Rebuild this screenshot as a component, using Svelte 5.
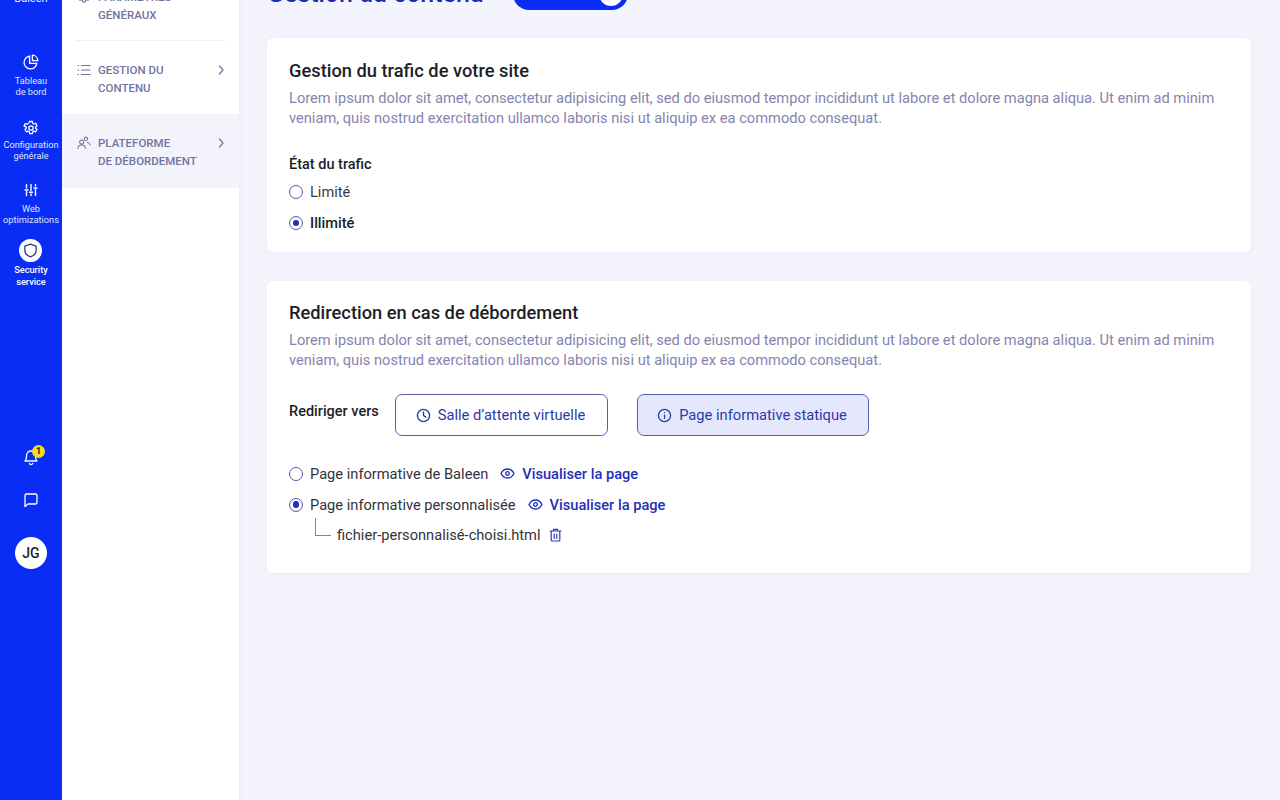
<script>
  const lorem = "Lorem ipsum dolor sit amet, consectetur adipisicing elit, sed do eiusmod tempor incididunt ut labore et dolore magna aliqua. Ut enim ad minim veniam, quis nostrud exercitation ullamco laboris nisi ut aliquip ex ea commodo consequat.";
</script>

<div class="page">
  <nav class="rail">
    <div class="brand">Baleen</div>
    <div class="rail-top">
      <div class="rail-item">
        <svg width="16" height="16" viewBox="0 0 16 16" fill="none" stroke="currentColor" stroke-width="1.3"><path d="M6.6 2.2a6.4 6.4 0 1 0 7.2 7.2H6.6z"/><path d="M9.4 1.2a5.6 5.6 0 0 1 5.4 5.4H9.4z"/></svg>
        <span>Tableau<br />de bord</span>
      </div>
      <div class="rail-item">
        <svg width="16" height="16" viewBox="0 0 16 16" fill="none" stroke="currentColor" stroke-width="1.3" stroke-linejoin="round"><path d="M6.7 1.5h2.6l.4 1.8 1.3.7 1.7-.6 1.3 2.3-1.3 1.2v1.4l1.3 1.2-1.3 2.3-1.7-.6-1.3.7-.4 1.8H6.7l-.4-1.8-1.3-.7-1.7.6-1.3-2.3 1.3-1.2V7.1L1 5.900l1.300-2.300 1.700.6 1.300-.7z"/><circle cx="8" cy="8" r="2.2"/></svg>
        <span>Configuration<br />générale</span>
      </div>
      <div class="rail-item">
        <svg width="14" height="14" viewBox="0 0 14 14" fill="none" stroke="currentColor" stroke-width="1.4" stroke-linecap="round"><path d="M2.5 1.5v3.4M2.5 8.5v4M7 1.5v6M7 11v1.5M11.5 1.5v1.4M11.5 6.5v6M1 7h3M5.500 9.200h3M10 5h3"/></svg>
        <span>Web<br />optimizations</span>
      </div>
      <div class="rail-item active">
        <div class="disc">
          <svg width="15" height="15" viewBox="0 0 16 16" fill="none" stroke="#2c3a8c" stroke-width="1.4" stroke-linejoin="round"><path d="M8 1.300 14 3.300v4.400c0 3.400-2.400 5.800-6 7-3.600-1.200-6-3.600-6-7V3.300z"/></svg>
        </div>
        <span>Security<br />service</span>
      </div>
    </div>
    <div class="rail-bottom">
      <div class="bell">
        <svg width="16" height="17" viewBox="0 0 16 17" fill="none" stroke="currentColor" stroke-width="1.3" stroke-linejoin="round" stroke-linecap="round"><path d="M8 2a4.400 4.400 0 0 0-4.400 4.400c0 4-1.600 5.600-1.600 5.600h12s-1.600-1.600-1.600-5.600A4.400 4.400 0 0 0 8 2z"/><path d="M6.300 14.500a1.900 1.900 0 0 0 3.400 0"/></svg>
        <b class="badge">1</b>
      </div>
      <svg class="chat" width="16" height="16" viewBox="0 0 16 16" fill="none" stroke="currentColor" stroke-width="1.3" stroke-linejoin="round"><path d="M3.500 2h9A1.500 1.500 0 0 1 14 3.500v7a1.500 1.500 0 0 1-1.500 1.500H5l-3 2.500v-11A1.500 1.500 0 0 1 3.500 2z"/></svg>
      <div class="avatar">JG</div>
    </div>
  </nav>

  <aside class="sub">
    <div class="sub-item first">
      <svg class="ico" width="14" height="14" viewBox="0 0 16 16" fill="none" stroke="currentColor" stroke-width="1.3"><circle cx="8" cy="8" r="2.200"/><path d="M6.700 1.500h2.600l.4 1.800 1.300.7 1.700-.6 1.300 2.300-1.300 1.200v1.400l1.300 1.200-1.300 2.300-1.700-.6-1.300.7-.4 1.800H6.700l-.4-1.800-1.300-.7-1.700.6-1.300-2.300 1.300-1.200V7.100L1 5.900l1.300-2.300 1.700.6 1.300-.7z"/></svg>
      <span>PARAMÈTRES<br />GÉNÉRAUX</span>
    </div>
    <hr />
    <div class="sub-item second-item">
      <svg class="ico" width="14" height="14" viewBox="0 0 14 14" fill="none" stroke="currentColor" stroke-width="1.2" stroke-linecap="round"><path d="M4.500 2.500H13M4.500 7H13M4.500 11.500H13M1 2.500h.6M1 7h.6M1 11.500h.6"/></svg>
      <span>GESTION DU<br />CONTENU</span>
      <svg class="chev" width="8" height="10" viewBox="0 0 8 10" fill="none" stroke="currentColor" stroke-width="1.2" stroke-linecap="round" stroke-linejoin="round"><path d="M2.500 1 6 5 2.500 9"/></svg>
    </div>
    <div class="sub-item current">
      <svg class="ico" width="15" height="14" viewBox="0 0 15 14" fill="none" stroke="currentColor" stroke-width="1.100" stroke-linecap="round"><circle cx="5" cy="6" r="2.200"/><path d="M1 13c0-2.600 1.800-3.800 4-3.800s4 1.200 4 3.800"/><circle cx="9.500" cy="2.500" r="1.800"/><path d="M11 6.500c1.500.2 2.800 1 3 2.500"/></svg>
      <span>PLATEFORME<br />DE DÉBORDEMENT</span>
      <svg class="chev" width="8" height="10" viewBox="0 0 8 10" fill="none" stroke="currentColor" stroke-width="1.2" stroke-linecap="round" stroke-linejoin="round"><path d="M2.500 1 6 5 2.500 9"/></svg>
    </div>
  </aside>

  <main class="main">
    <header class="head">
      <h1>Gestion du contenu</h1>
      <div class="toggle"><i></i></div>
    </header>

    <section class="card">
      <h2>Gestion du trafic de votre site</h2>
      <p>{lorem}</p>
      <h3>État du trafic</h3>
      <div class="radios">
        <label class="radio"><i class="dot"></i>Limité</label>
        <label class="radio sel"><i class="dot on"></i>Illimité</label>
      </div>
    </section>

    <section class="card second">
      <h2>Redirection en cas de débordement</h2>
      <p>{lorem}</p>
      <div class="redirect">
        <h3>Rediriger vers</h3>
        <button class="choice">
          <svg width="15" height="15" viewBox="0 0 16 16" fill="none" stroke="currentColor" stroke-width="1.500" stroke-linecap="round" stroke-linejoin="round"><circle cx="8" cy="8" r="6.500"/><path d="M8 4.300V8l2.500 1.800"/></svg>
          Salle d’attente virtuelle
        </button>
        <button class="choice picked">
          <svg width="15" height="15" viewBox="0 0 16 16" fill="none" stroke="currentColor" stroke-width="1.400" stroke-linecap="round"><circle cx="8" cy="8" r="6.500"/><path d="M8 7.500v3.500M8 5v.1"/></svg>
          Page informative statique
        </button>
      </div>
      <div class="options">
        <div class="opt">
          <i class="dot"></i>Page informative de Baleen
          <a class="view">
            <svg width="15" height="11" viewBox="0 0 15 11" fill="none" stroke="currentColor" stroke-width="1.300"><path d="M1 5.500C2.500 2.600 4.800 1 7.500 1s5 1.600 6.500 4.500C12.500 8.400 10.200 10 7.500 10S2.500 8.400 1 5.500z"/><circle cx="7.500" cy="5.500" r="1.800"/></svg>
            Visualiser la page
          </a>
        </div>
        <div class="opt">
          <i class="dot on"></i>Page informative personnalisée
          <a class="view">
            <svg width="15" height="11" viewBox="0 0 15 11" fill="none" stroke="currentColor" stroke-width="1.300"><path d="M1 5.500C2.500 2.600 4.800 1 7.500 1s5 1.600 6.500 4.500C12.500 8.400 10.200 10 7.500 10S2.500 8.400 1 5.500z"/><circle cx="7.500" cy="5.500" r="1.800"/></svg>
            Visualiser la page
          </a>
        </div>
        <div class="file">
          <i class="elbow"></i>
          <span>fichier-personnalisé-choisi.html</span>
          <svg width="13" height="14" viewBox="0 0 13 14" fill="none" stroke="#2b3bb5" stroke-width="1.200" stroke-linecap="round" stroke-linejoin="round"><path d="M1 3h11M4.500 3V1.300h4V3M2.200 3v9a1 1 0 0 0 1 1h6.600a1 1 0 0 0 1-1V3M5.200 6v4.500M7.800 6v4.500"/></svg>
        </div>
      </div>
    </section>
  </main>
</div>

<style>
  :global(body) { margin: 0; background: #f3f4fc; }
  .page {
    display: flex;
    height: 800px;
    overflow: hidden;
    font-family: Roboto, "Liberation Sans", sans-serif;
    color: #1d1d26;
  }

  .rail {
    width: 62px;
    flex: none;
    background: #0a2df5;
    color: #fff;
    display: flex;
    flex-direction: column;
    align-items: center;
    font-size: 9.200px;
    line-height: 11px;
    text-align: center;
    margin-top: -8px;
  }
  .brand { font-size: 11px; line-height: 14px; height: 14px; opacity: .95; }
  .rail-top { display: flex; flex-direction: column; align-items: center; margin-top: 48px; }
  .rail-item { display: flex; flex-direction: column; align-items: center; gap: 5px; height: 64px; color: #dfe4ff; }
  .rail-item svg { color: #fff; }
  .rail-item:nth-child(1) { height: 66px; }
  .rail-item:nth-child(2) { height: 63px; gap: 3px; }
  .rail-item:nth-child(3) { gap: 6px; }
  .rail-item.active { color: #fff; font-weight: 500; margin-top: -8px; gap: 2px; line-height: 11.500px; }
  .disc {
    width: 23px; height: 23px; border-radius: 50%;
    background: #fff; display: grid; place-items: center;
  }
  .rail-bottom {
    margin-top: 146px;
    display: flex; flex-direction: column; align-items: center;
  }
  .bell { position: relative; height: 17px; width: 16px; }
  .badge {
    position: absolute; top: -4px; left: 9px;
    width: 13px; height: 13px; border-radius: 50%;
    background: #f7dc1b; color: #1d1d26;
    font-size: 9px; line-height: 13px; font-weight: 700;
  }
  .chat { margin-top: 26px; }
  .avatar {
    margin-top: 29px;
    width: 32px; height: 32px; border-radius: 50%;
    background: #fff; color: #1d1d26;
    font-size: 14px; line-height: 32px; font-weight: 500;
  }

  .sub {
    width: 177px;
    flex: none;
    background: #fff;
    color: #73739f;
    font-size: 11.500px;
    font-weight: 500;
    line-height: 18px;
    display: flex;
    flex-direction: column;
    margin-right: 6px;
    box-shadow: 3px 0 4px rgba(90, 90, 160, .04);
  }
  .sub-item { display: flex; align-items: flex-start; padding: 0 14px 0 15px; gap: 7px; position: relative; }
  .sub-item .ico { margin-top: 2px; flex: none; width: 14px; }
  .sub-item span { flex: 1; }
  .sub-item .chev { margin-top: 4px; }
  .first { margin-top: -12px; height: 39px; }
  .first span { white-space: nowrap; }
  hr { border: 0; border-top: 1px solid #eeeef6; margin: 13px 13px 20px 14px; width: 150px; }
  .second-item { height: 53px; }
  .current { background: #f3f4fb; height: 74px; padding-top: 20px; box-sizing: border-box; }

  .main {
    flex: 1;
    padding: 0 29px 0 22px;
    min-width: 0;
  }
  .head { display: flex; align-items: flex-end; gap: 29px; height: 10px; }
  h1 { margin: 0 0 3px; font-size: 24.950px; line-height: 26px; font-weight: 500; color: #1a2cb4; white-space: nowrap; }
  .toggle {
    width: 115px; height: 32px; flex: none;
    background: #0a2df5; border-radius: 16px;
    position: relative;
  }
  .toggle i {
    position: absolute; right: 5px; top: 4px;
    width: 24px; height: 24px; background: #fff; border-radius: 50%;
  }
  .card {
    background: #fff;
    border-radius: 6px;
    margin-top: 28px;
    padding: 21px 22px;
    box-shadow: 0 1px 6px rgba(90, 90, 170, .06);
    box-sizing: border-box;
    height: 214px;
  }
  .card.second { height: 292px; margin-top: 29px; padding-top: 20px; }
  h2 { margin: 0; font-size: 18.300px; line-height: 24px; font-weight: 500; color: #1d1d26; }
  p { margin: 6px 0 0; font-size: 14.660px; line-height: 19.500px; color: #8584ae; }
  h3 { margin: 0; font-size: 14.500px; line-height: 18px; font-weight: 500; }
  .card > h3 { margin-top: 27.500px; }
  .radios { display: flex; flex-direction: column; gap: 13px; margin-top: 9.500px; }
  .radio { display: flex; align-items: center; gap: 7px; font-size: 14.600px; line-height: 18px; color: #3a3a45; }
  .radio.sel { color: #1d1d26; font-weight: 500; }
  .dot {
    width: 14px; height: 14px; border-radius: 50%;
    border: 1.200px solid #5a58a8; flex: none;
    box-sizing: border-box; display: inline-block; position: relative; background: #fff;
  }
  .dot.on::after {
    content: ""; position: absolute; inset: 2.800px;
    border-radius: 50%; background: #1f2fc0;
  }
  .redirect { display: flex; align-items: flex-start; margin-top: 24px; }
  .redirect h3 { width: 106px; flex: none; margin-top: 8.500px; }
  .choice {
    height: 42px; box-sizing: border-box;
    display: flex; align-items: center; justify-content: center; gap: 7px;
    border: 1.300px solid #5a5da8; border-radius: 7px; background: #fff;
    color: #2c3aa6; font: 400 14.700px/18px Roboto, sans-serif;
    width: 213px; padding: 0 2px 0 0;
  }
  .choice.picked { background: #e5e8fc; width: 232px; margin-left: 29px; }
  .options { margin-top: 22px; font-size: 14.650px; line-height: 18px; color: #33333d; }
  .opt { display: flex; align-items: center; height: 31px; gap: 7px; }
  .view { display: inline-flex; align-items: center; gap: 7px; margin-left: 5px; color: #1f2fb5; font-weight: 500; }
  .file { display: flex; align-items: center; gap: 8px; height: 30px; }
  .elbow {
    width: 15px; height: 17px; margin-left: 26px; margin-right: -2px; margin-top: -16px;
    border-left: 1px solid #7d7dc4; border-bottom: 1px solid #7d7dc4; flex: none;
  }
</style>
